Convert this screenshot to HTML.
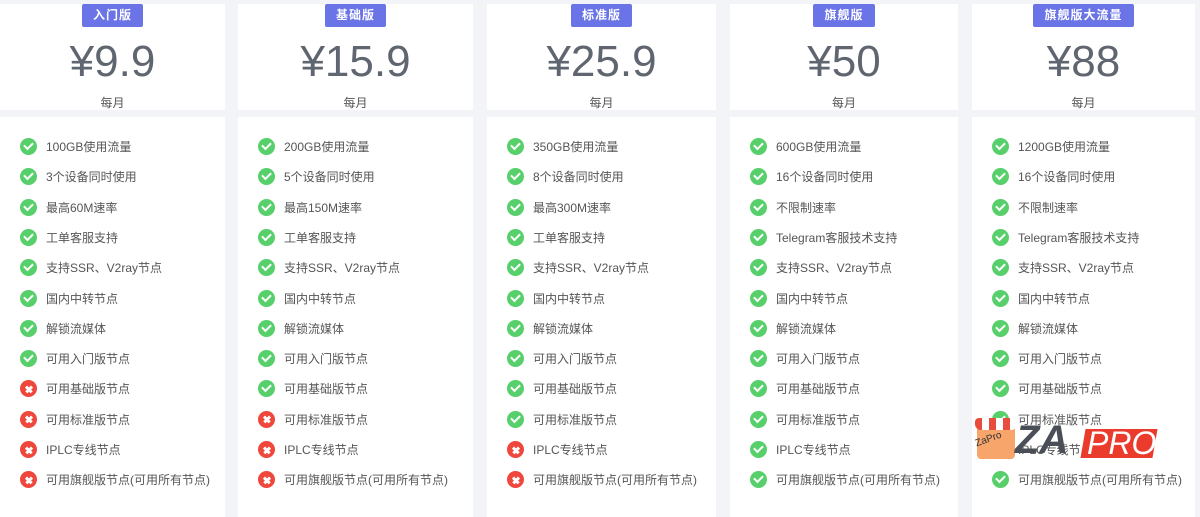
<!DOCTYPE html><html><head><meta charset="utf-8"><style>
body{margin:0;width:1200px;height:499px;background:#f3f4f8;position:relative;overflow:hidden;font-family:"Liberation Sans","Noto Sans CJK SC",sans-serif}
.h,.l{position:absolute;background:#fff}
.h{top:4px;height:106px;text-align:center}
.l{top:117px;height:400px}
.b{display:inline-block;margin-top:0;height:23px;line-height:23px;padding:0 11px;background:#6a74e6;color:#fff;font-size:12px;font-weight:bold;border-radius:2px;letter-spacing:1px}
.p{font-size:44px;color:#5f6670;margin-top:10px;line-height:50px}
.m{font-size:12px;color:#555;margin-top:7px}
.i{position:absolute;left:20px;font-size:12px;color:#555;height:16px;line-height:16px;white-space:nowrap}
.i span{display:inline-block;width:17px;height:17px;border-radius:50%;vertical-align:top;margin-right:9px;position:relative;top:-1px}
.g{background:#57d06b}.r{background:#f0473d}
.g:after{content:"";position:absolute;left:4px;top:4px;width:7px;height:4px;border-left:2.5px solid #fff;border-bottom:2.5px solid #fff;transform:rotate(-45deg)}
.r:before,.r:after{content:"";position:absolute;left:4.5px;top:7.5px;width:8px;height:2.5px;background:#fff;transform:rotate(45deg)}
.r:after{transform:rotate(-45deg)}
</style></head><body>
<div id="root"></div>
<script>
var cols=[[0,225],[238,235],[487,229],[730,228],[972,223]];
var names=["入门版","基础版","标准版","旗舰版","旗舰版大流量"],prices=["¥9.9","¥15.9","¥25.9","¥50","¥88"];
var items=[
[["100GB使用流量",1],["3个设备同时使用",1],["最高60M速率",1],["工单客服支持",1],["支持SSR、V2ray节点",1],["国内中转节点",1],["解锁流媒体",1],["可用入门版节点",1],["可用基础版节点",0],["可用标准版节点",0],["IPLC专线节点",0],["可用旗舰版节点(可用所有节点)",0]],
[["200GB使用流量",1],["5个设备同时使用",1],["最高150M速率",1],["工单客服支持",1],["支持SSR、V2ray节点",1],["国内中转节点",1],["解锁流媒体",1],["可用入门版节点",1],["可用基础版节点",1],["可用标准版节点",0],["IPLC专线节点",0],["可用旗舰版节点(可用所有节点)",0]],
[["350GB使用流量",1],["8个设备同时使用",1],["最高300M速率",1],["工单客服支持",1],["支持SSR、V2ray节点",1],["国内中转节点",1],["解锁流媒体",1],["可用入门版节点",1],["可用基础版节点",1],["可用标准版节点",1],["IPLC专线节点",0],["可用旗舰版节点(可用所有节点)",0]],
[["600GB使用流量",1],["16个设备同时使用",1],["不限制速率",1],["Telegram客服技术支持",1],["支持SSR、V2ray节点",1],["国内中转节点",1],["解锁流媒体",1],["可用入门版节点",1],["可用基础版节点",1],["可用标准版节点",1],["IPLC专线节点",1],["可用旗舰版节点(可用所有节点)",1]],
[["1200GB使用流量",1],["16个设备同时使用",1],["不限制速率",1],["Telegram客服技术支持",1],["支持SSR、V2ray节点",1],["国内中转节点",1],["解锁流媒体",1],["可用入门版节点",1],["可用基础版节点",1],["可用标准版节点",1],["IPLC专线节点",1],["可用旗舰版节点(可用所有节点)",1]]];
var h="";
cols.forEach(function(c,k){
h+='<div class="h" style="left:'+c[0]+'px;width:'+c[1]+'px"><div class="b">'+names[k]+'</div><div class="p">'+prices[k]+'</div><div class="m">每月</div></div>';
h+='<div class="l" style="left:'+c[0]+'px;width:'+c[1]+'px">';
items[k].forEach(function(it,j){h+='<div class="i" style="top:'+(22+j*30.3)+'px"><span class="'+(it[1]?'g':'r')+'"></span>'+it[0]+'</div>';});
h+='</div>';});
h+='<div style="position:absolute;left:977px;top:424px;width:38px;height:35px;background:#f7a56a;border-radius:4px"></div><div style="position:absolute;left:975px;top:418px;width:42px;height:12px;background:repeating-linear-gradient(90deg,#e84c3d 0 7px,#fff 7px 14px);border-radius:4px 4px 6px 6px"></div><div style="position:absolute;left:975px;top:434px;font-size:10px;color:#333;transform:rotate(-20deg)">ZaPro</div>';
h+='<div style="position:absolute;left:1015px;top:419px;font-size:40px;font-weight:bold;font-style:italic;color:#4a4f57;line-height:42px">ZA</div>';
h+='<div style="position:absolute;left:1083px;top:429px;width:72px;height:29px;background:#ea3b2c;transform:skewX(-10deg)"></div><div style="position:absolute;left:1087px;top:426px;font-size:32px;font-style:italic;color:#fff;line-height:34px">PRO</div>';
document.getElementById("root").innerHTML=h;
</script></body></html>
